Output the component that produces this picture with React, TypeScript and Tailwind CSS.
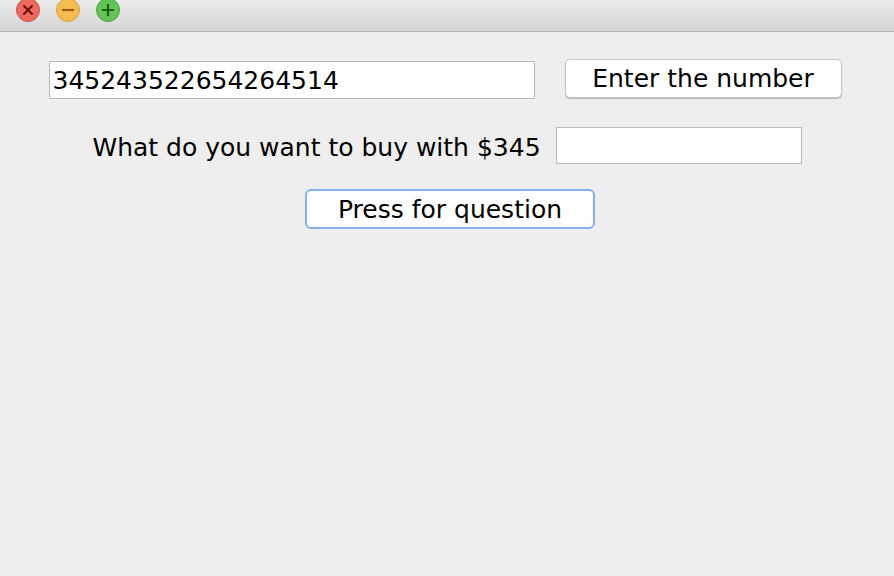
export default function App() {
  return (
    <div
      className="w-[894px] h-[576px] bg-[#eeeeee] flex flex-col overflow-hidden"
      style={{ fontFamily: '"DejaVu Sans", "Liberation Sans", sans-serif' }}
    >
      {/* window title bar */}
      <div className="h-[32px] shrink-0 bg-gradient-to-b from-[#ebebeb] to-[#d4d4d4] border-b border-[#b4b4b4] relative">
        <div className="absolute left-[16px] top-[-2px] w-[24px] h-[24px] rounded-full bg-[#ee6a5f] border border-[#d2524a] flex items-center justify-center">
          <svg width="14" height="14" viewBox="0 0 14 14">
            <path d="M3 3 L11 11 M11 3 L3 11" stroke="#6b0f0a" strokeWidth="2" strokeLinecap="round" />
          </svg>
        </div>
        <div className="absolute left-[56px] top-[-2px] w-[24px] h-[24px] rounded-full bg-[#f5bd4f] border border-[#d9a03c] flex items-center justify-center">
          <svg width="16" height="14" viewBox="0 0 16 14">
            <path d="M2 7 H14" stroke="#9a5a0b" strokeWidth="2.2" />
          </svg>
        </div>
        <div className="absolute left-[96px] top-[-2px] w-[24px] h-[24px] rounded-full bg-[#61c454] border border-[#4aa63d] flex items-center justify-center">
          <svg width="16" height="16" viewBox="0 0 16 16">
            <path d="M8 2 V14 M2 8 H14" stroke="#1d5e12" strokeWidth="2.2" />
          </svg>
        </div>
      </div>

      {/* row 1 */}
      <div className="mt-[27px] h-[40px] flex items-center justify-center gap-[30px] pr-[4px]">
        <div className="w-[486px] h-[38px] mt-[2px] bg-white border border-[#b9b9b9] flex items-center px-[3px] text-[25px] text-black leading-none">
          345243522654264514
        </div>
        <button className="w-[277px] h-[39px] mb-[1px] bg-white rounded-[5px] border border-[#c8c8c8] shadow-[0_1px_1px_rgba(0,0,0,0.25)] text-[25px] text-black leading-none">
          Enter the number
        </button>
      </div>

      {/* row 2 */}
      <div className="mt-[28px] h-[37px] flex items-center justify-center gap-[15px]">
        <span className="text-[25px] text-black leading-none mt-[3px]">What do you want to buy with $345</span>
        <div className="w-[246px] h-[37px] bg-white border border-[#b9b9b9]"></div>
      </div>

      {/* row 3 */}
      <div className="mt-[25px] h-[40px] flex items-center justify-center pl-[6px]">
        <button className="w-[290px] h-[40px] bg-white rounded-[6px] border-2 border-[#82b1ee] text-[25px] text-black leading-none">
          Press for question
        </button>
      </div>
    </div>
  );
}
